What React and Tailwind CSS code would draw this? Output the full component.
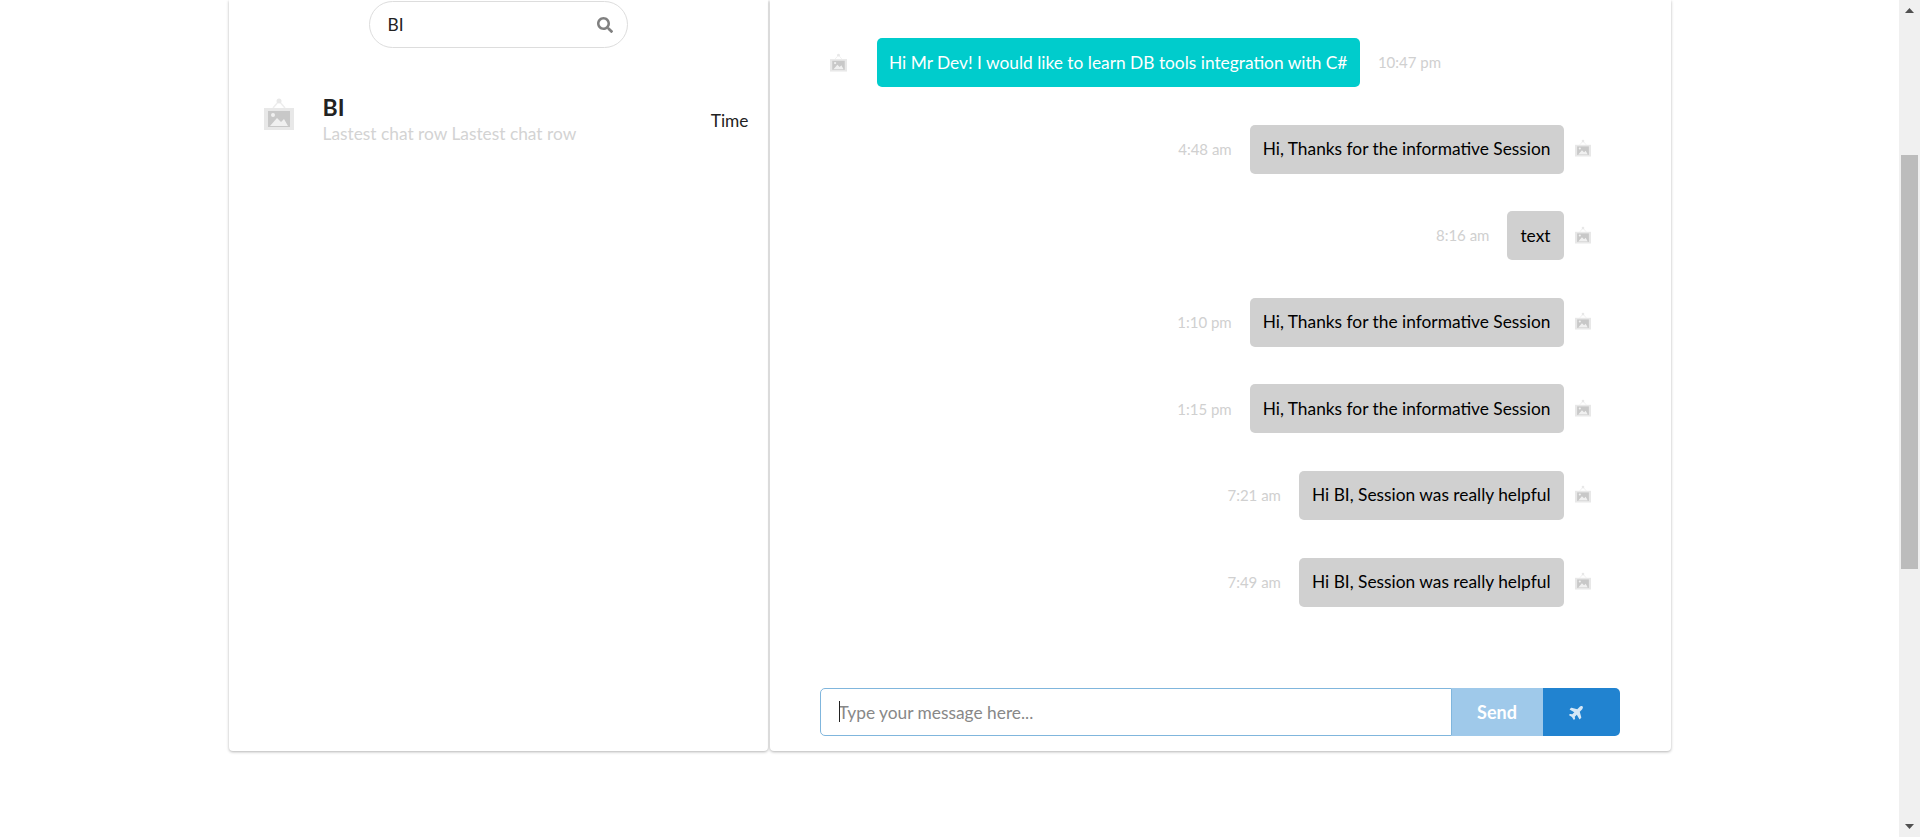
import React from 'react';
import { FaSearch, FaPlane } from 'react-icons/fa';

const messages = [
	{ id: 1, text: 'Hi Mr Dev! I would like to learn DB tools integration with C#', time: '10:47 pm', mine: false },
	{ id: 2, text: 'Hi, Thanks for the informative Session', time: '4:48 am', mine: true },
	{ id: 3, text: 'text', time: '8:16 am', mine: true },
	{ id: 4, text: 'Hi, Thanks for the informative Session', time: '1:10 pm', mine: true },
	{ id: 5, text: 'Hi, Thanks for the informative Session', time: '1:15 pm', mine: true },
	{ id: 6, text: 'Hi BI, Session was really helpful', time: '7:21 am', mine: true },
	{ id: 7, text: 'Hi BI, Session was really helpful', time: '7:49 am', mine: true },
];

const ImagePlaceholder = ({ className }) => (
	<svg viewBox="0 0 30 32" className={className}>
		<path d="M9 10 L15 3 L21 10" fill="none" stroke="#eeeeee" strokeWidth="1.5" />
		<circle cx="15" cy="3" r="2.5" fill="#e8e8e8" />
		<rect x="0" y="10" width="30" height="22" fill="#e8e8e8" />
		<rect x="4" y="13" width="22" height="16" fill="#c8c8c8" />
		<circle cx="9" cy="17" r="2" fill="#f0f0f0" />
		<path d="M6 28 L13 20 L17 24 L20 21 L24 28 Z" fill="#f0f0f0" />
	</svg>
);

const Message = ({ text, time, mine }) => {
	if (mine) {
		return (
			<div className="flex items-center justify-end h-[49px] pr-[29px]">
				<span className="text-[15px] text-[#d0d0d0] mr-[18px]">{time}</span>
				<div className="h-full flex items-center px-[13px] rounded-[5px] bg-[#d0d0d0] text-black text-[17.33px]">{text}</div>
				<ImagePlaceholder className="w-[16px] h-[18px] ml-[11px] -translate-y-px blur-[0.4px]" />
			</div>
		);
	}
	return (
		<div className="flex items-center h-[49px] pl-[10px]">
			<ImagePlaceholder className="w-[17px] h-[19px] blur-[0.4px]" />
			<div className="h-full flex items-center px-[12.5px] ml-[30px] rounded-[5px] bg-[#00cccc] text-white text-[17.33px]">{text}</div>
			<span className="text-[15px] text-[#d0d0d0] ml-[18px]">{time}</span>
		</div>
	);
};

const App = () => {
	return (
		<div className="flex h-[837px] overflow-hidden bg-white text-[#222222] font-['Lato','Noto_Sans',sans-serif]">
			<main className="flex-1 min-w-0">
				<div className="w-[1442px] mx-auto flex gap-[2px] h-[751px]">
					<section className="w-[539px] rounded-b-[4px] bg-white shadow-[0_1px_3px_rgba(0,0,0,0.3)]">
						<div className="flex justify-center pt-px">
							<div className="relative w-[259px] h-[47px]">
								<input
									readOnly
									value="BI"
									className="w-full h-full pl-[18px] pr-[40px] rounded-full border border-[#dddddd] text-[17.33px] text-[#222222] outline-none"
								/>
								<FaSearch className="absolute right-[15px] top-[16px] w-[16px] h-[16px] text-[#808080]" />
							</div>
						</div>
						<div className="flex items-start mt-[47px] pl-[35px] pr-[19px]">
							<ImagePlaceholder className="w-[30px] h-[32px] shrink-0 mt-[3px] blur-[0.4px]" />
							<div className="ml-[29px] flex-1 min-w-0">
								<div className="text-[23px] font-bold leading-[25px]">BI</div>
								<div className="mt-[3px] text-[17.33px] leading-[22px] text-[#d3d3d3]">Lastest chat row Lastest chat row</div>
							</div>
							<span className="text-[17.33px] leading-[24px] mt-[14px]">Time</span>
						</div>
					</section>

					<section className="flex-1 min-w-0 flex flex-col justify-between rounded-b-[4px] bg-white shadow-[0_1px_3px_rgba(0,0,0,0.3)] pl-[50px] pr-[51px] pt-[38px] pb-[15px]">
						<div className="flex flex-col gap-[37.6px]">
							{messages.map((m) => (
								<Message key={m.id} text={m.text} time={m.time} mine={m.mine} />
							))}
						</div>
						<div className="flex h-[48px]">
							<div className="relative flex-1 min-w-0">
								<input
									readOnly
									placeholder="Type your message here..."
									className="w-full h-full pl-[18px] pr-3 rounded-l-[5px] border border-[#80b6dd] text-[17.33px] outline-none placeholder:text-[#888888]"
								/>
								<span className="absolute left-[19px] top-[13px] w-px h-[21px] bg-[#222222]" />
							</div>
							<button className="w-[91px] bg-[#9fc9ea] text-white text-[18px] font-bold">Send</button>
							<button className="w-[77px] flex items-center justify-center rounded-r-[5px] bg-[#2183d0]">
								<FaPlane className="w-[16px] h-[16px] mr-[9px] -rotate-45 text-[#d5e7f6]" />
							</button>
						</div>
					</section>
				</div>
			</main>

			<aside className="w-[21px] shrink-0 flex flex-col bg-[#f0f0f0]">
				<div className="h-[21px] flex items-center justify-center">
					<svg viewBox="0 0 9 5" className="w-[9px] h-[5px]">
						<path d="M4.5 0 L9 5 L0 5 Z" fill="#505050" />
					</svg>
				</div>
				<div className="mt-[134px] mx-[2px] h-[414px] bg-[#bcbcbc]" />
				<div className="mt-auto h-[21px] flex items-center justify-center">
					<svg viewBox="0 0 9 5" className="w-[9px] h-[5px]">
						<path d="M0 0 L9 0 L4.5 5 Z" fill="#505050" />
					</svg>
				</div>
			</aside>
		</div>
	);
};

export default App;
